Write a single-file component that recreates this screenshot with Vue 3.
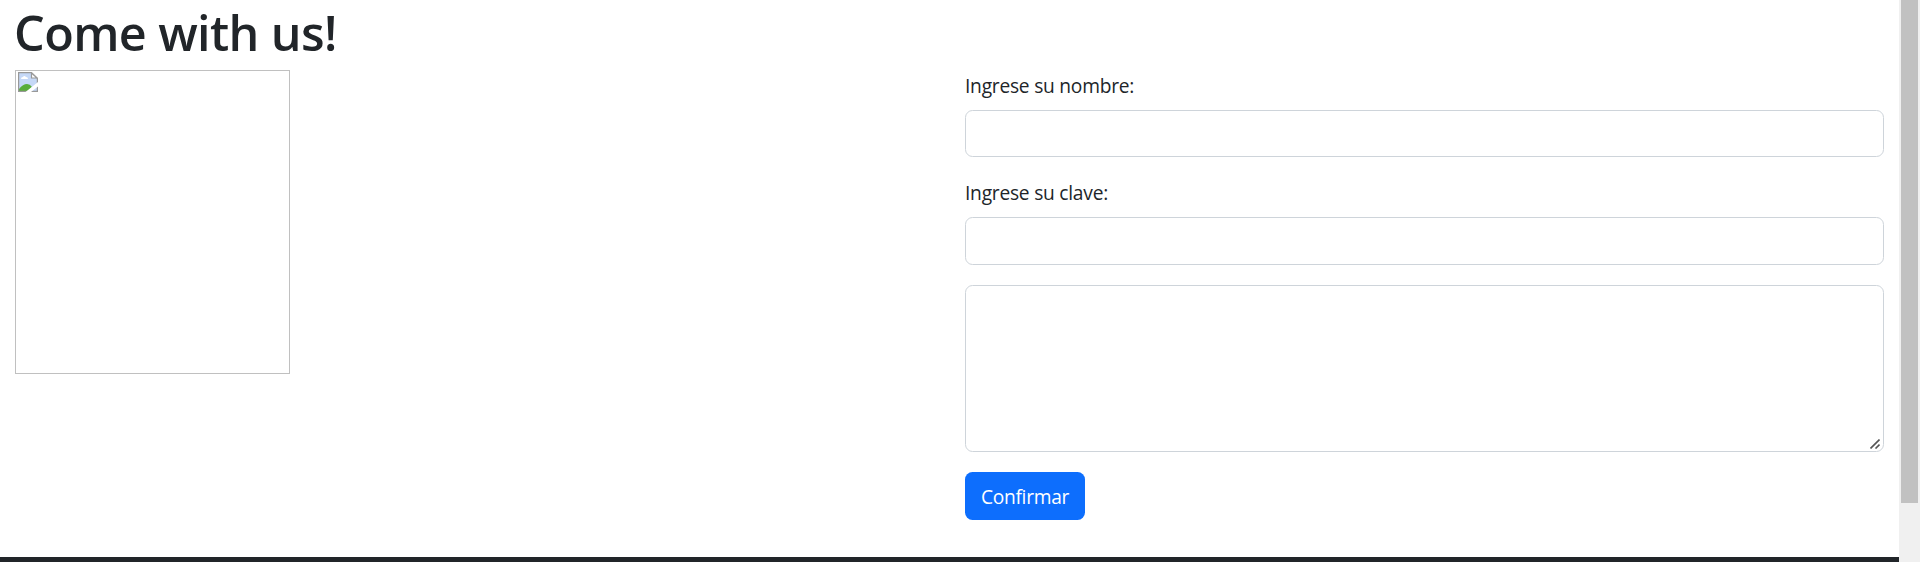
<script setup>
import { ref } from 'vue'

const nombre = ref('')
const clave = ref('')
const mensaje = ref('')
</script>

<template>
  <div class="window">
    <main class="page">
      <h1>Come with us!</h1>
      <div class="row">
        <div class="col">
          <div class="picture">
            <svg width="20" height="20" viewBox="0 0 20 20">
              <path d="M1 1H13L19 7V19H1Z" fill="#c5d8f7" />
              <path d="M3 7Q3 5 5 5Q6 3 8 5Q10 5 10 7Z" fill="#fff" />
              <path d="M1 19V17Q5 12 9 12Q12 12 14 15L10 19Z" fill="#58ad39" />
              <path d="M.6 .6H13.5L19.4 6.5V19.4H.6Z" fill="none" stroke="#999" stroke-width="1.2" />
              <path d="M13.5 1V6H19Z" fill="#fff" stroke="#999" stroke-width="1.2" />
              <path d="M7.5 20L20 10V14.5L13 20Z" fill="#fff" />
            </svg>
          </div>
        </div>
        <form class="col form" @submit.prevent>
          <label for="nombre">Ingrese su nombre:</label>
          <input id="nombre" v-model="nombre" class="first" type="text" />
          <label for="clave">Ingrese su clave:</label>
          <input id="clave" v-model="clave" type="password" />
          <div class="area">
            <textarea v-model="mensaje"></textarea>
            <svg class="grip" width="10" height="10" viewBox="0 0 10 10">
              <path d="M.5 9.5L9.5 .5M5.5 9.5L9.5 5.5" stroke="#555" stroke-width="1.6" />
            </svg>
          </div>
          <button type="submit">Confirmar</button>
        </form>
      </div>
      <footer></footer>
    </main>
    <aside class="track"><div class="thumb"></div></aside>
  </div>
</template>

<style>
body { overflow: hidden; background: #fff; }
</style>

<style scoped>
* { box-sizing: border-box; }
.window {
  display: flex;
  width: 1920px;
  height: 562px;
  overflow: hidden;
  color: #212529;
  font: 19.2px/30px "Segoe UI", "Open Sans", sans-serif;
}
.page { width: 1899px; display: flex; flex-direction: column; }
h1 {
  margin: 0;
  padding-left: 14px;
  height: 70px;
  font-size: 48.5px;
  font-weight: 600;
  line-height: 64px;
  letter-spacing: -.6px;
}
.row { display: flex; height: 487px; padding: 0 15px; gap: 31px; }
.col { flex: 1; }
.col:first-child { flex: 0 0 919px; }
.picture { width: 275px; height: 304px; border: 1px solid #c0c0c0; padding: 1px 2px; }
.picture svg { display: block; }
.form { display: flex; flex-direction: column; }
label { height: 30px; margin: 0 0 10px; line-height: 32px; letter-spacing: -.24px; }
input, textarea {
  display: block;
  width: 100%;
  margin: 0;
  border: 1px solid #ced4da;
  border-radius: 7.5px;
  background: #fff;
  padding: 7px 15px;
  font: inherit;
  outline: none;
}
input { height: 48px; margin-bottom: 20px; }
.first { height: 47px; }
.area { position: relative; height: 167px; margin-bottom: 20px; }
textarea { height: 167px; resize: none; }
.grip { position: absolute; right: 4px; bottom: 3px; }
button {
  width: 120px;
  height: 48px;
  padding: 2px 0 0;
  border: 0;
  border-radius: 7.5px;
  background: #0d6efd;
  color: #fff;
  font: inherit;
  letter-spacing: -.3px;
}
footer { height: 5px; background: #212529; }
.track { width: 21px; height: 562px; background: #f0f0f0; padding-left: 2px; }
.thumb { width: 17px; height: 503px; background: #c1c1c1; }
</style>
